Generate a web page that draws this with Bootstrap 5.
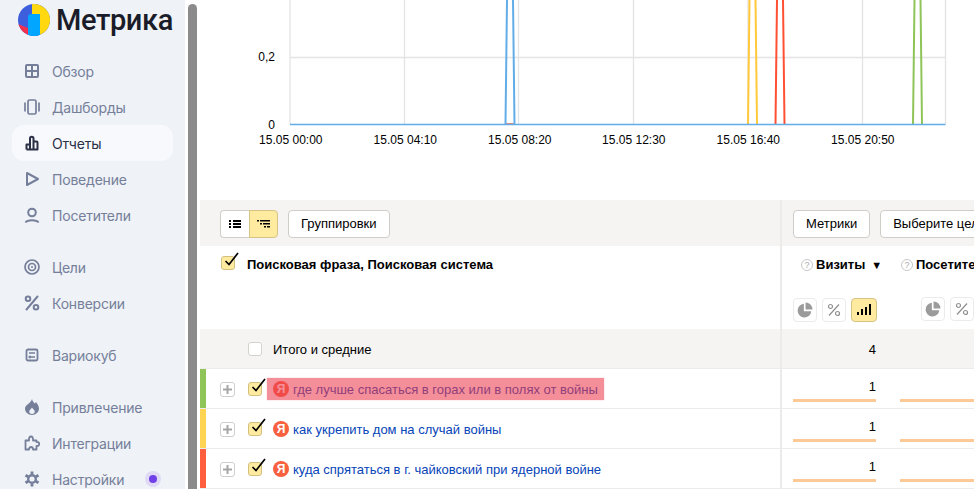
<!DOCTYPE html>
<html lang="ru">
<head>
<meta charset="utf-8">
<title>Метрика</title>
<link href="https://cdn.jsdelivr.net/npm/bootstrap@5.3.0/dist/css/bootstrap.min.css" rel="stylesheet">
<style>
html,body{height:489px;overflow:hidden;background:#fff;}
body{font-family:"Liberation Sans",Arial,sans-serif;font-size:13px;color:#000;}
.shell{width:974px;height:489px;}
.side{width:185px;flex:none;background:#eff2f7;font-family:Inter,"Noto Sans",sans-serif;font-size:14px;letter-spacing:-.2px;color:#757f9a;padding:4px 12px 0;}
.brand{height:49px;margin-left:6px;gap:6px;align-items:flex-start;}
.brand svg{flex:none;}
.brand-word{font-family:Roboto,Inter,sans-serif;font-size:29px;font-weight:500;line-height:32px;color:#1a1d29;letter-spacing:-.4px;white-space:nowrap;}
.navgroup{margin-bottom:16px;}
.navitem{height:36px;padding-left:12px;gap:12px;border-radius:12px;}
.navitem svg{width:16px;height:16px;flex:none;}
.navitem.on{background:#f7f9fc;color:#2b3047;}
.dotbadge{width:16px;height:16px;border-radius:50%;background:#dfd9f6;margin-left:9px;}
.dotbadge i{width:8px;height:8px;border-radius:50%;background:#6f3fe8;display:block;}
.scrolltrack{width:9px;flex:none;margin:4px 0 0 3px;background:#8b8b8b;border-radius:5px 5px 0 0;}
.mainpane{flex:1 1 auto;min-width:0;overflow:hidden;}
.chart{display:block;width:777px;height:200px;}
.chart text{font-family:"Liberation Sans",Arial,sans-serif;font-size:12px;fill:#000;}
.report{margin-left:3px;width:774px;}
.line{height:40px;border-bottom:1px solid #ebebeb;}
.cellmain{width:582px;flex:none;border-right:2px solid #ebebeb;}
.cellvals{flex:none;}
.toolline{height:46px;background:#f5f4f2;}
.toolline .cellmain{padding:10px 0 0 20px;gap:10px;}
.toolline .cellvals{padding:10px 0 0 11px;gap:10px;}
.ybtn{height:28px;padding:0 12px;font-size:13px;line-height:26px;background:#fff;border:1px solid #cfcdc8;border-radius:4px;color:#000;white-space:nowrap;}
.ybtn-ico{width:29px;padding:0;}
.ybtn-on{background:#ffeba0;border-color:#d6c386;}
.ybtn-ico svg{display:block;margin:auto;}
.headline{height:83px;}
.headline .cellmain{padding:10px 0 0 21px;}
.colname{font-weight:700;line-height:16px;padding-top:1px;}
.box{width:14px;height:14px;flex:none;border:1px solid #d4d2cd;border-radius:3px;background:#fff;position:relative;}
.box.ticked{background:#ffeba0;border-color:#d3c07f;}
.box.ticked svg{position:absolute;left:1px;top:-5px;width:16px;height:16px;}
.hval{width:106px;flex:none;padding:10px 0 0 11px;}
.hval2{padding-left:13px;width:120px;}
.helpmark{width:12px;height:12px;border:1px solid #c8c8c8;border-radius:50%;font-size:9px;line-height:10px;text-align:center;color:#aaa;margin:0 3px 0 8px;flex:none;background:#fff;}
.sortmark{font-size:11px;margin-left:6px;padding-top:1px;}
.modes{margin-top:24px;gap:5px;}
.modes-shifted{margin-left:20px;}
.mode{width:24px;height:24px;border:1px solid #ebebeb;border-radius:4px;background:#fff;}
.mode-on{width:26px;background:#ffeba0;border-color:#d6c386;}
.totalline{background:#f5f4f2;}
.totalline .cellmain{padding-left:48px;gap:11px;}
.totalline .cellmain>span:last-child,.vnum-total{padding-top:2px;}
.vcell{width:106px;flex:none;padding:0 12px 0 11px;position:relative;}
.vnum{text-align:right;line-height:16px;}
.vbar{height:3px;background:#fdc996;margin-top:4px;}
.vcell-data{padding-top:10px;}
.vcell-open{width:96px;padding:10px 0 0 12px;}
.strip{width:6px;flex:none;}
.strip-g{background:#8fc558;}.strip-y{background:#ffd452;}.strip-r{background:#ff5f3f;}
.expander{width:15px;height:15px;border:1px solid #cfcfcf;border-radius:3px;background:#fff;margin:13px 13px 0 14px;flex:none;}
.dataline .box{margin-top:13px;}
.phrase{position:relative;margin-left:11px;gap:4px;height:40px;color:#0644b8;white-space:nowrap;}
.phrase-text{padding-top:2px;}
.ya{width:16px;height:16px;border-radius:50%;background:#f8603f;color:#fff;font-size:12px;font-weight:700;line-height:16px;text-align:center;flex:none;}
.marked::after{content:"";position:absolute;left:-6px;right:-6px;top:9px;height:22px;background:rgba(236,60,80,.58);box-shadow:0 0 1px rgba(236,60,80,.5);}
</style>
</head>
<body>
<div class="shell d-flex">
  <aside class="side">
    <div class="brand d-flex">
      <svg width="32" height="32" viewBox="0 0 32 32">
        <defs><clipPath id="logoclip"><circle cx="16" cy="16" r="16"/></clipPath></defs>
        <g clip-path="url(#logoclip)">
          <rect width="32" height="32" fill="#3e5fdd"/>
          <path d="M0 20 L10 24 V32 H0Z" fill="#f4304f"/>
          <path d="M14 0 H32 V32 H22 V10 H14Z" fill="#ffd80f"/>
          <path d="M10 13 a3 3 0 0 1 3-3 H22 V32 H10Z" fill="#00a6ff"/>
        </g>
      </svg>
      <span class="brand-word">Метрика</span>
    </div>
    <div class="navgroup">
      <div class="navitem d-flex align-items-center">
        <svg viewBox="0 0 16 16" fill="none" stroke="currentColor" stroke-width="2"><rect x="2" y="2" width="12" height="12" rx="1"/><path d="M8 2v12M2 8h12"/></svg><span>Обзор</span></div>
      <div class="navitem d-flex align-items-center">
        <svg viewBox="0 0 16 16" fill="none" stroke="currentColor" stroke-width="1.700"><rect x="4" y="1" width="8" height="14" rx="1.500"/><path d="M1 3.500v9M15 3.500v9"/></svg><span>Дашборды</span></div>
      <div class="navitem on d-flex align-items-center">
        <svg viewBox="0 0 16 16" fill="none" stroke="currentColor" stroke-width="2"><path d="M2.500 14.500V9.500h3.500V14.500M6 14.500V3.500a1.750 1.750 0 0 1 3.500 0V14.500M9.500 14.500V6.500h3a1 1 0 0 1 1 1V14.500H2.500" stroke-linejoin="round"/></svg><span>Отчеты</span></div>
      <div class="navitem d-flex align-items-center">
        <svg viewBox="0 0 16 16" fill="none" stroke="currentColor" stroke-width="2" stroke-linejoin="round"><path d="M3 2 L14 8 L3 14Z"/></svg><span>Поведение</span></div>
      <div class="navitem d-flex align-items-center">
        <svg viewBox="0 0 16 16" fill="none" stroke="currentColor" stroke-width="2"><circle cx="8" cy="5.500" r="3.800"/><path d="M1.500 15.500c1-1.600 3-2.200 6.500-2.200s5.500.6 6.500 2.200"/></svg><span>Посетители</span></div>
    </div>
    <div class="navgroup">
      <div class="navitem d-flex align-items-center">
        <svg viewBox="0 0 16 16" fill="none" stroke="currentColor" stroke-width="1.700"><circle cx="8" cy="8" r="7"/><circle cx="8" cy="8" r="3.500"/><circle cx="8" cy="8" r="1" fill="currentColor" stroke="none"/></svg><span>Цели</span></div>
      <div class="navitem d-flex align-items-center">
        <svg viewBox="0 0 16 16" fill="none" stroke="currentColor" stroke-width="2"><circle cx="4" cy="3.800" r="2.300"/><circle cx="12" cy="12.200" r="2.300"/><path d="M13.500 1.500 L2.500 14.500" stroke-linecap="round"/></svg><span>Конверсии</span></div>
    </div>
    <div class="navgroup">
      <div class="navitem d-flex align-items-center">
        <svg viewBox="0 0 16 16" fill="none" stroke="currentColor" stroke-width="1.800"><rect x="2.500" y="2.500" width="11" height="11" rx="1.500"/><path d="M5 6h6M11 10H5M6.500 8.800 5 10l1.500 1.200" stroke-width="1.300"/></svg><span>Вариокуб</span></div>
    </div>
    <div class="navgroup">
      <div class="navitem d-flex align-items-center">
        <svg viewBox="0 0 16 16" fill="currentColor"><path fill-rule="evenodd" d="M8 0c.4 2.300 1.800 3.400 3 4.800.3-.8.500-1.200.9-1.800 1.500 1.800 3.100 3.900 3.100 6.600 0 3.700-3 6.400-7 6.400s-7-2.700-7-6.400C1 5.500 7 4.400 8 0zM8 8.500c-.7 1.500-2.800 2.300-2.800 4.100 0 1.400 1.200 2.300 2.800 2.300s2.800-.9 2.800-2.300c0-1.800-2.100-2.600-2.800-4.100z"/></svg><span>Привлечение</span></div>
      <div class="navitem d-flex align-items-center">
        <svg viewBox="0 0 16 16" fill="none" stroke="currentColor" stroke-width="1.800" stroke-linejoin="round"><path d="M1.500 14.500V5.500H5C4.700 2.800 5.700 1.500 7 1.500S9.300 2.800 9 5.500H12.500V7C14.500 6.800 15.200 7.800 15.200 9S14.500 11.200 12.500 11V14.500H9C9 12.800 8 12 7 12S5 12.800 5 14.500Z"/></svg><span>Интеграции</span></div>
      <div class="navitem d-flex align-items-center">
        <svg viewBox="0 0 16 16" fill="none" stroke="currentColor"><circle cx="8" cy="8" r="3.800" stroke-width="2.400"/><path d="M8 .5v3M8 12.500v3M1.500 4.200l2.700 1.600M11.800 10.200l2.700 1.600M1.500 11.800l2.700-1.600M11.800 5.800l2.700-1.600" stroke-width="2.800"/></svg><span>Настройки</span>
        <span class="dotbadge d-flex align-items-center justify-content-center"><i></i></span></div>
    </div>
  </aside>
  <div class="scrolltrack"></div>
  <main class="mainpane">
    <svg class="chart" viewBox="197 0 777 200" fill="none">
      <g stroke="#e4e4e4" stroke-width="1.300">
        <path d="M290 0V124M404.500 0V124M518.500 0V124M633.500 0V124M748 0V124M862.500 0V124M945.500 0V124M290 57.500H945"/>
      </g>
      <g stroke-width="2">
        <path stroke="#ff5a3c" stroke-width="1.500" d="M505 124H515"/>
        <path stroke="#ffc93a" d="M748 124L749.500 0M755.500 0L757 124"/>
        <path stroke="#ff5033" d="M775.500 124L777 0M783 0L784.500 124"/>
        <path stroke="#8fc558" d="M913 124L914.500 0M920.500 0L922 124"/>
        <path stroke="#62ade8" d="M505.500 124L507 0M513 0L514.500 124"/>
        <path stroke="#62ade8" stroke-width="1.500" d="M290 124.500H945.500"/>
      </g>
      <text x="290.800" y="144" text-anchor="middle">15.05 00:00</text>
      <text x="405.300" y="144" text-anchor="middle">15.05 04:10</text>
      <text x="519.800" y="144" text-anchor="middle">15.05 08:20</text>
      <text x="633.800" y="144" text-anchor="middle">15.05 12:30</text>
      <text x="748.300" y="144" text-anchor="middle">15.05 16:40</text>
      <text x="862.800" y="144" text-anchor="middle">15.05 20:50</text>
      <text x="275" y="61" text-anchor="end">0,2</text>
      <text x="275" y="129" text-anchor="end">0</text>
    </svg>
    <section class="report">
      <div class="toolline d-flex">
        <div class="cellmain d-flex">
          <div class="d-flex">
            <div class="ybtn ybtn-ico rounded-end-0 border-end-0 d-flex align-items-center">
              <svg width="14" height="10" viewBox="0 0 14 10" fill="#000"><path d="M1 1h2v2H1zM5 1h8v2H5zM1 4h2v2H1zM5 4h8v2H5zM1 7h2v2H1zM5 7h8v2H5z"/></svg></div>
            <div class="ybtn ybtn-ico ybtn-on rounded-start-0 d-flex align-items-center">
              <svg width="14" height="10" viewBox="0 0 14 10" fill="#000"><path d="M0 1h2v1.500H0zM3 1h10v1.500H3zM3 4h2v1.500H3zM6 4h7v1.500H6zM7 7h2v1.500H7zM10 7h3v1.500h-3z"/></svg></div>
          </div>
          <div class="ybtn">Группировки</div>
        </div>
        <div class="cellvals d-flex">
          <div class="ybtn">Метрики</div>
          <div class="ybtn">Выберите цель</div>
        </div>
      </div>
      <div class="headline d-flex">
        <div class="cellmain d-flex">
          <span class="box ticked"><svg viewBox="0 0 16 16" fill="none" stroke="#000" stroke-width="1.700"><path d="M2.500 9 L6 12.500 L15 1"/></svg></span>
          <span class="colname ms-2 ps-1">Поисковая фраза, Поисковая система</span>
        </div>
        <div class="hval">
          <div class="d-flex align-items-center"><span class="helpmark">?</span><span class="colname">Визиты</span><span class="sortmark">▼</span></div>
          <div class="modes d-flex">
            <span class="mode d-flex align-items-center justify-content-center"><svg width="16" height="16" viewBox="0 0 14 14" fill="#9b9b9b"><path d="M6 1.500A6 6 0 1 0 12.500 8H6z"/><path d="M7.500 0.500v6h6a6 6 0 0 0-6-6z"/></svg></span>
            <span class="mode d-flex align-items-center justify-content-center"><svg width="14" height="14" viewBox="0 0 14 14" fill="none" stroke="#8f8f8f" stroke-width="1.200"><circle cx="3.500" cy="3.500" r="2"/><circle cx="10.500" cy="10.500" r="2"/><path d="M12 1.500L2 12.500"/></svg></span>
            <span class="mode mode-on d-flex align-items-center justify-content-center"><svg width="16" height="12" viewBox="0 0 16 12" fill="#000"><path d="M1 8h2v3H1zM5 5h2v6H5zM9 3h2v8H9zM13 0h2v11h-2z"/></svg></span>
          </div>
        </div>
        <div class="hval hval2">
          <div class="d-flex align-items-center"><span class="helpmark ms-0">?</span><span class="colname text-nowrap">Посетители</span></div>
          <div class="modes modes-shifted d-flex">
            <span class="mode d-flex align-items-center justify-content-center"><svg width="16" height="16" viewBox="0 0 14 14" fill="#9b9b9b"><path d="M6 1.500A6 6 0 1 0 12.500 8H6z"/><path d="M7.500 0.500v6h6a6 6 0 0 0-6-6z"/></svg></span>
            <span class="mode d-flex align-items-center justify-content-center"><svg width="14" height="14" viewBox="0 0 14 14" fill="none" stroke="#8f8f8f" stroke-width="1.200"><circle cx="3.500" cy="3.500" r="2"/><circle cx="10.500" cy="10.500" r="2"/><path d="M12 1.500L2 12.500"/></svg></span>
          </div>
        </div>
      </div>
      <div class="line totalline d-flex">
        <div class="cellmain d-flex align-items-center"><span class="box"></span><span>Итого и средние</span></div>
        <div class="vcell d-flex align-items-center justify-content-end"><span class="vnum vnum-total">4</span></div>
      </div>
      <div class="line dataline d-flex">
        <div class="cellmain d-flex">
          <span class="strip strip-g"></span><span class="expander d-flex align-items-center justify-content-center"><svg width="9" height="9" viewBox="0 0 9 9" fill="#a5a5a5"><path d="M3.500 0h2v3.500H9v2H5.500V9h-2V5.500H0v-2h3.500z"/></svg></span>
          <span class="box ticked"><svg viewBox="0 0 16 16" fill="none" stroke="#000" stroke-width="1.700"><path d="M2.500 9 L6 12.500 L15 1"/></svg></span>
          <span class="phrase marked d-flex align-items-center"><span class="ya">Я</span><span class="phrase-text">где лучше спасаться в горах или в полях от войны</span></span>
        </div>
        <div class="vcell vcell-data"><div class="vnum">1</div><div class="vbar"></div></div>
        <div class="vcell-open"><div class="vnum invisible">1</div><div class="vbar"></div></div>
      </div>
      <div class="line dataline d-flex">
        <div class="cellmain d-flex">
          <span class="strip strip-y"></span><span class="expander d-flex align-items-center justify-content-center"><svg width="9" height="9" viewBox="0 0 9 9" fill="#a5a5a5"><path d="M3.500 0h2v3.500H9v2H5.500V9h-2V5.500H0v-2h3.500z"/></svg></span>
          <span class="box ticked"><svg viewBox="0 0 16 16" fill="none" stroke="#000" stroke-width="1.700"><path d="M2.500 9 L6 12.500 L15 1"/></svg></span>
          <span class="phrase d-flex align-items-center"><span class="ya">Я</span><span class="phrase-text">как укрепить дом на случай войны</span></span>
        </div>
        <div class="vcell vcell-data"><div class="vnum">1</div><div class="vbar"></div></div>
        <div class="vcell-open"><div class="vnum invisible">1</div><div class="vbar"></div></div>
      </div>
      <div class="line dataline d-flex">
        <div class="cellmain d-flex">
          <span class="strip strip-r"></span><span class="expander d-flex align-items-center justify-content-center"><svg width="9" height="9" viewBox="0 0 9 9" fill="#a5a5a5"><path d="M3.500 0h2v3.500H9v2H5.500V9h-2V5.500H0v-2h3.500z"/></svg></span>
          <span class="box ticked"><svg viewBox="0 0 16 16" fill="none" stroke="#000" stroke-width="1.700"><path d="M2.500 9 L6 12.500 L15 1"/></svg></span>
          <span class="phrase d-flex align-items-center"><span class="ya">Я</span><span class="phrase-text">куда спрятаться в г. чайковский при ядерной войне</span></span>
        </div>
        <div class="vcell vcell-data"><div class="vnum">1</div><div class="vbar"></div></div>
        <div class="vcell-open"><div class="vnum invisible">1</div><div class="vbar"></div></div>
      </div>
    </section>
  </main>
</div>
<script src="https://cdn.jsdelivr.net/npm/bootstrap@5.3.0/dist/js/bootstrap.bundle.min.js"></script>
</body>
</html>
